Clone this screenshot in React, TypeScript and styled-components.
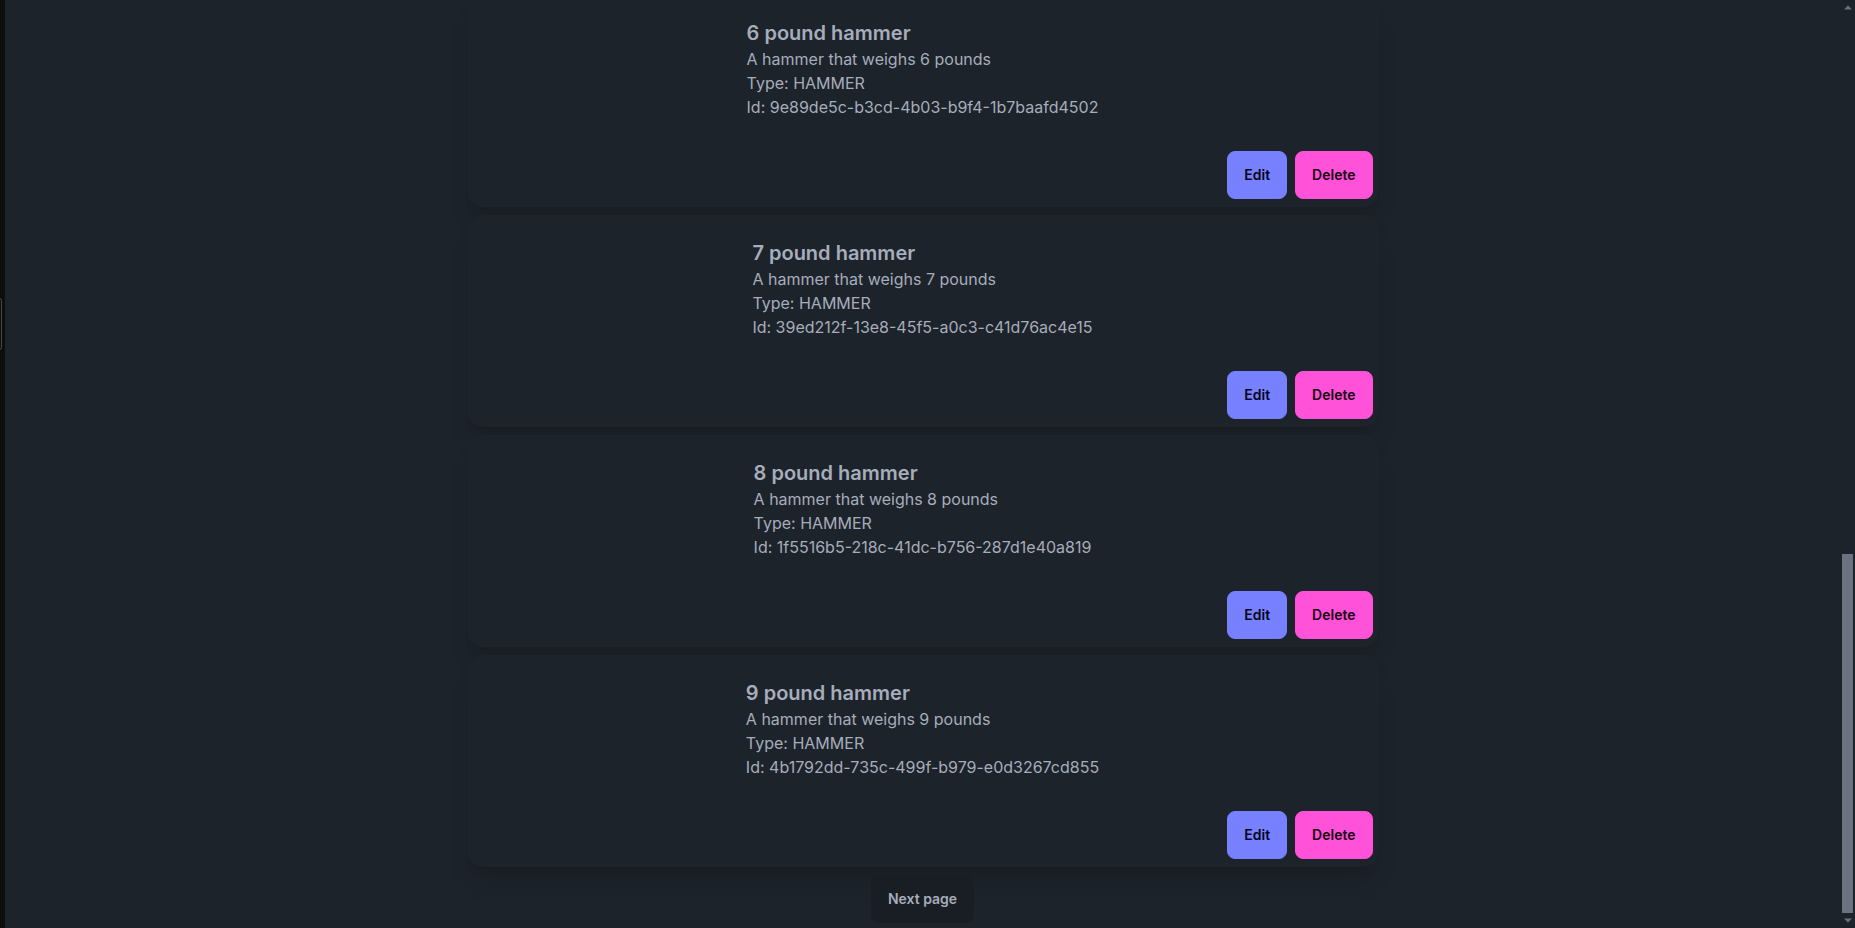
import React from "react";
import styled, { createGlobalStyle } from "styled-components";

const GlobalStyle = createGlobalStyle`
  *, *::before, *::after { box-sizing: border-box; }
  html, body {
    margin: 0;
    padding: 0;
    height: 100%;
    overflow: hidden;
    background: #1d232a;
  }
  body {
    font-family: Inter, "Noto Sans", "Liberation Sans", sans-serif;
    color: #a6adbb;
  }
  #root { height: 100%; }
`;

const Shell = styled.div`
  display: flex;
  height: 100vh;
  background: #1d232a;
`;

const EdgeStrip = styled.div`
  position: relative;
  flex: 0 0 5px;
  background: #0d0d0d;
`;

const EdgeHandle = styled.span`
  position: absolute;
  left: -3px;
  top: 298px;
  width: 5px;
  height: 52px;
  border-radius: 3px;
  border: 1px solid #4a4a4a;
`;

const Main = styled.main`
  flex: 1;
  height: 100%;
  overflow: hidden;
  background: #1d232a;
`;

const ScrollRail = styled.div`
  flex: 0 0 15px;
  display: flex;
  flex-direction: column;
  background: #1d232a;
`;

const RailArrow = styled.div`
  flex: 0 0 15px;
  display: flex;
  align-items: center;
  justify-content: center;
`;

const RailTrack = styled.div`
  flex: 1;
  display: flex;
  flex-direction: column;
  justify-content: flex-end;
  padding: 0 2px;
`;

const RailThumb = styled.div`
  height: 359px;
  background: #6b7280;
`;

const List = styled.div`
  display: flex;
  flex-direction: column;
  align-items: center;
  gap: 8px;
  margin-top: -5px;
`;

const Card = styled.article`
  width: 912px;
  display: flex;
  flex-direction: column;
  padding: 24px 6px 8px;
  border-radius: 16px;
  background: #1d232a;
  box-shadow: 0 20px 25px -5px rgba(0, 0, 0, 0.1),
    0 8px 10px -6px rgba(0, 0, 0, 0.1);
`;

const CardBody = styled.div`
  display: flex;
  justify-content: center;
`;

const Info = styled.div`
  display: flex;
  flex-direction: column;
  text-align: left;
`;

const Title = styled.h2`
  margin: 0;
  font-size: 20px;
  line-height: 28px;
  font-weight: 600;
  color: #a6adbb;
`;

const Line = styled.p`
  margin: 0;
  font-size: 16px;
  line-height: 24px;
  color: #a6adbb;
`;

const Actions = styled.div`
  display: flex;
  justify-content: flex-end;
  gap: 8px;
  margin-top: 32px;
`;

const tones = {
  primary: { bg: "#7780ff", fg: "#050617" },
  secondary: { bg: "#ff52d9", fg: "#190211" },
  plain: { bg: "#191e24", fg: "#a6adbb" },
};

const Button = styled.button<{ $tone: keyof typeof tones }>`
  height: 48px;
  padding: 0 16px;
  border-radius: 8px;
  font-family: Inter, "Noto Sans", "Liberation Sans", sans-serif;
  font-size: 14px;
  line-height: 20px;
  font-weight: 600;
  cursor: pointer;
  border: 1px solid ${(p) => tones[p.$tone].bg};
  background: ${(p) => tones[p.$tone].bg};
  color: ${(p) => tones[p.$tone].fg};
`;

const Pager = styled.div`
  display: flex;
  justify-content: center;
`;

const products = [
  { n: 6, id: "9e89de5c-b3cd-4b03-b9f4-1b7baafd4502" },
  { n: 7, id: "39ed212f-13e8-45f5-a0c3-c41d76ac4e15" },
  { n: 8, id: "1f5516b5-218c-41dc-b756-287d1e40a819" },
  { n: 9, id: "4b1792dd-735c-499f-b979-e0d3267cd855" },
].map(({ n, id }) => ({
  id,
  name: `${n} pound hammer`,
  description: `A hammer that weighs ${n} pounds`,
  type: "HAMMER",
}));

function Arrow({ up }: { up?: boolean }) {
  return (
    <svg width="8" height="5" viewBox="0 0 8 5">
      <path d={up ? "M0 4.5 L4 0.5 L8 4.5 Z" : "M0 0.5 L4 4.5 L8 0.5 Z"} fill="#6b7280" />
    </svg>
  );
}

export default function App() {
  return (
    <>
      <GlobalStyle />
      <Shell>
        <EdgeStrip>
          <EdgeHandle />
        </EdgeStrip>
        <Main>
          <List>
            {products.map((p) => (
              <Card key={p.id}>
                <CardBody>
                  <Info>
                    <Title>{p.name}</Title>
                    <Line>{p.description}</Line>
                    <Line>Type: {p.type}</Line>
                    <Line>Id: {p.id}</Line>
                  </Info>
                </CardBody>
                <Actions>
                  <Button $tone="primary">Edit</Button>
                  <Button $tone="secondary">Delete</Button>
                </Actions>
              </Card>
            ))}
            <Pager>
              <Button $tone="plain">Next page</Button>
            </Pager>
          </List>
        </Main>
        <ScrollRail>
          <RailArrow>
            <Arrow up />
          </RailArrow>
          <RailTrack>
            <RailThumb />
          </RailTrack>
          <RailArrow>
            <Arrow />
          </RailArrow>
        </ScrollRail>
      </Shell>
    </>
  );
}
